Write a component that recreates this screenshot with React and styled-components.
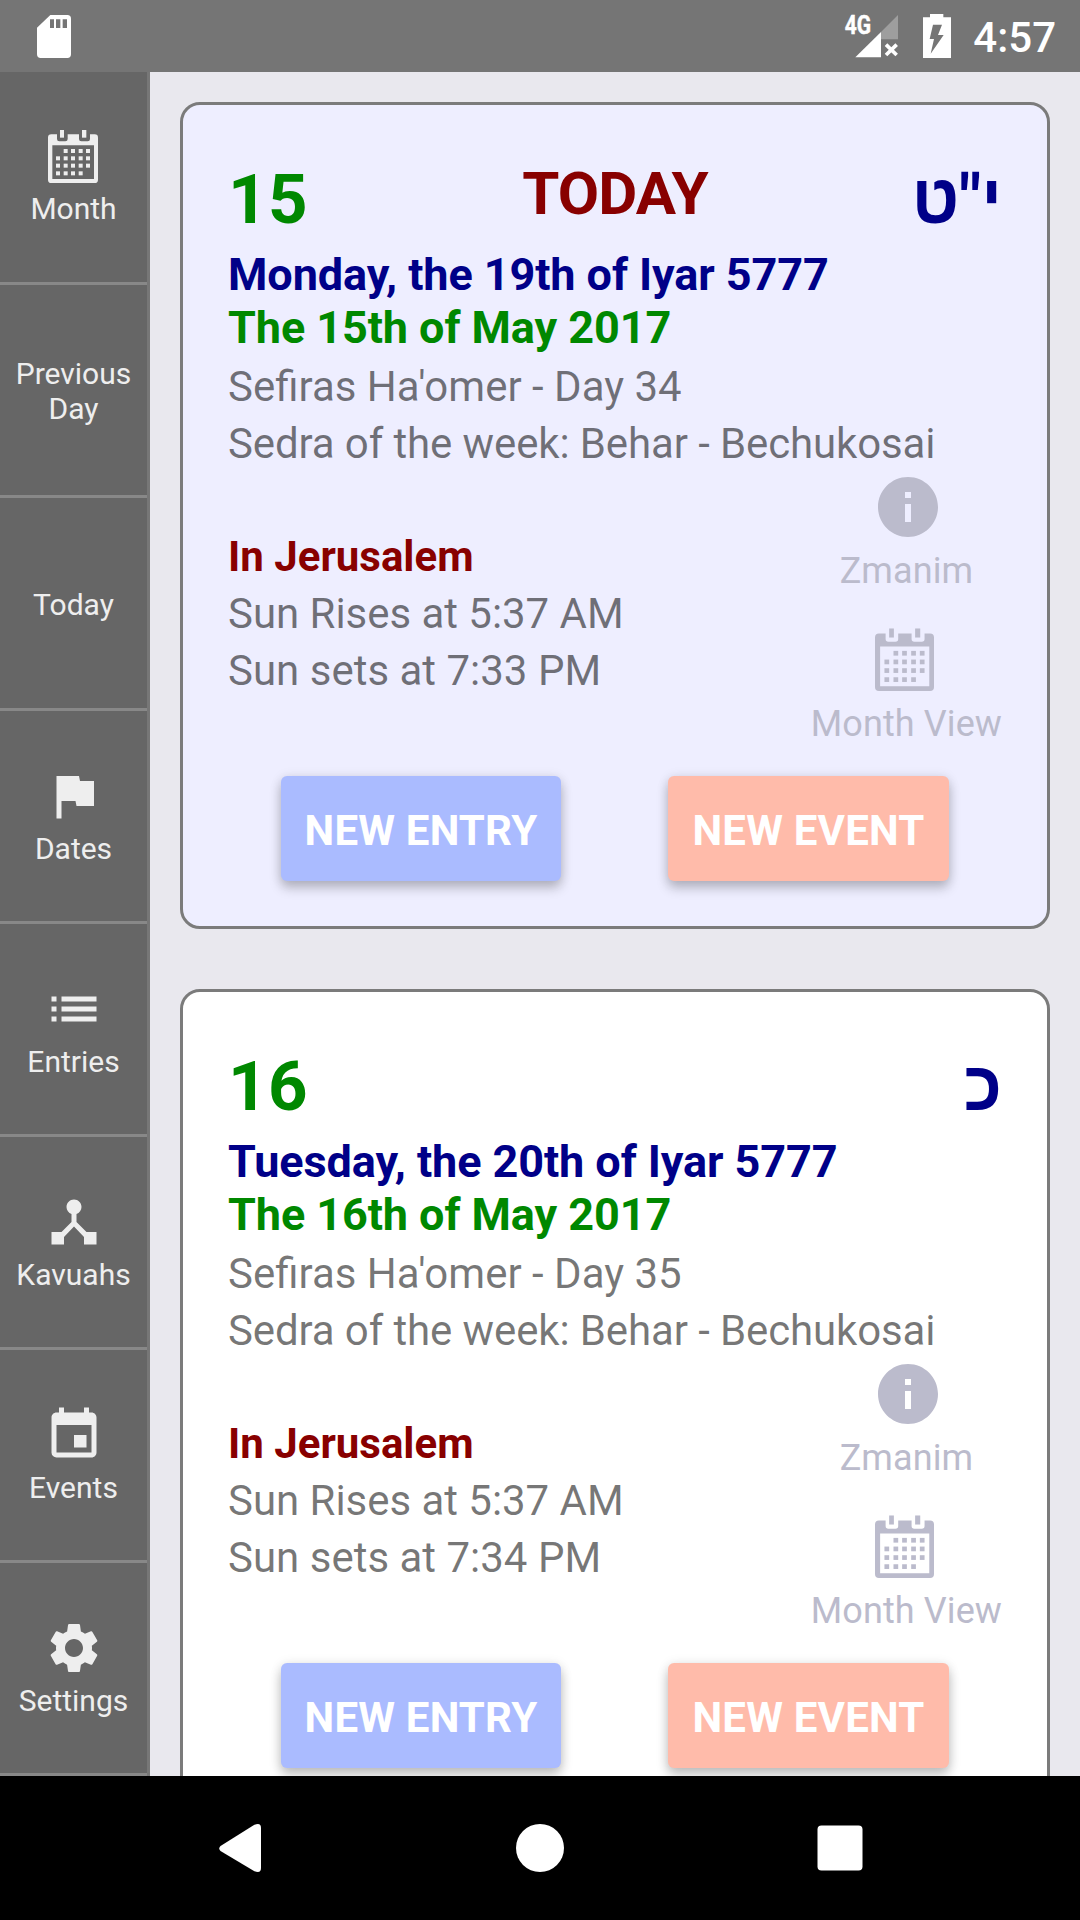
import React from "react";
import styled, { createGlobalStyle } from "styled-components";
import { MdFlag, MdList, MdDeviceHub, MdEvent, MdSettings, MdInfo } from "react-icons/md";

const GlobalStyle = createGlobalStyle`
  html, body { margin: 0; padding: 0; }
  body { width: 1080px; height: 1920px; overflow: hidden; background: #000; }
  * { box-sizing: border-box; }
  svg { display: block; flex: none; overflow: visible; }
`;

const Screen = styled.div`
  width: 1080px;
  height: 1920px;
  display: flex;
  flex-direction: column;
  overflow: hidden;
  font-family: Roboto, "Noto Sans", sans-serif;
`;

const StatusBar = styled.header`
  height: 72px;
  flex: none;
  display: flex;
  align-items: center;
  justify-content: space-between;
  padding: 0 24px 0 37px;
  background: #757575;
  color: #fff;
`;

const StatusIcons = styled.div`
  display: flex;
  align-items: center;
  gap: 24px;
`;

const NetworkType = styled.text`
  font-family: Roboto, sans-serif;
  font-weight: 700;
  font-size: 76px;
  stroke: #fff;
  stroke-width: 1.5px;
`;

const Clock = styled.span`
  margin-left: -2px;
  padding-top: 3px;
  font-size: 42px;
  line-height: 50px;
  font-weight: 500;
`;

const Main = styled.div`
  height: 1704px;
  flex: none;
  display: flex;
  overflow: hidden;
`;

const Sidebar = styled.nav`
  width: 150px;
  flex: none;
  display: flex;
  flex-direction: column;
  background: #666;
  border-right: 3px solid #777;
`;

const NavItem = styled.a`
  height: 213px;
  flex: none;
  display: flex;
  flex-direction: column;
  align-items: center;
  justify-content: center;
  border-bottom: 3px solid #888;
  color: #eee;
  padding-top: ${(p) => (p.$iconless ? 2 : 0)}px;
`;

const NavLabel = styled.span`
  margin-top: ${(p) => p.$gap}px;
  margin-bottom: ${(p) => (p.$gap ? 6 - p.$gap : 0)}px;
  font-size: 30px;
  line-height: 35px;
  text-align: center;
`;

const IconSlot = styled.span`
  height: 60px;
  display: flex;
  align-items: center;
  justify-content: center;
  padding-right: ${(p) => p.$shift || 0}px;
`;

const Feed = styled.main`
  flex: 1;
  min-width: 0;
  background: #e9e8ee;
  padding: 30px 30px 0;
  display: flex;
  flex-direction: column;
  gap: 60px;
`;

const Card = styled.article`
  height: 827px;
  flex: none;
  border: 3px solid #7b7b7b;
  border-radius: 20px;
  padding: 45px;
  background: ${(p) => (p.$today ? "#eeeeff" : "#ffffff")};
`;

const CardHead = styled.div`
  height: 98px;
  display: grid;
  grid-template-columns: 1fr auto 1fr;
  align-items: start;
`;

const DayNumber = styled.span`
  padding-top: 10px;
  font-size: 69px;
  line-height: 80px;
  font-weight: 700;
  letter-spacing: 0.5px;
  color: #008800;
`;

const TodayMark = styled.span`
  padding-top: 9px;
  font-size: 60px;
  line-height: 70px;
  font-weight: 700;
  letter-spacing: -0.8px;
  color: #880000;
`;

const HebrewDay = styled.span`
  padding-top: 10px;
  font-family: Roboto, "Liberation Sans", sans-serif;
  font-size: 69px;
  line-height: 80px;
  font-weight: 700;
  color: #000088;
  text-align: right;
`;

const DateLine = styled.div`
  font-size: 45px;
  line-height: 53px;
  font-weight: 700;
  letter-spacing: -0.08px;
  color: ${(p) => p.$color};
  white-space: nowrap;
`;

const InfoLine = styled.div`
  height: 57px;
  font-size: 42px;
  line-height: 57px;
  color: ${(p) => (p.$place ? "#880000" : "rgba(0, 0, 0, 0.54)")};
  font-weight: ${(p) => (p.$place ? 700 : 400)};
  letter-spacing: ${(p) => p.$tracking || "normal"};
  white-space: nowrap;
`;

const Details = styled.div`
  padding-top: 4px;
`;

const LowerRow = styled.div`
  height: 273px;
  display: flex;
  justify-content: space-between;
`;

const SunTimes = styled.div`
  padding-top: 56px;
`;

const Links = styled.div`
  margin-top: -1px;
  display: flex;
  flex-direction: column;
  align-items: center;
  color: #bbbbcc;
`;

const LinkItem = styled.a`
  display: flex;
  flex-direction: column;
  align-items: center;
  height: ${(p) => p.$height}px;
`;

const LinkIcon = styled.span`
  height: ${(p) => p.$height}px;
  padding-left: ${(p) => p.$left || 0}px;
  padding-right: ${(p) => p.$right || 0}px;
  display: flex;
`;

const LinkLabel = styled.span`
  font-size: 36px;
  line-height: 42px;
  letter-spacing: 0.1px;
  white-space: nowrap;
`;

const Actions = styled.div`
  margin-top: 31px;
  padding: 0 53px;
  display: flex;
  justify-content: space-between;
`;

const ActionButton = styled.button`
  width: ${(p) => p.$width}px;
  height: 105px;
  padding: 4px 0 0;
  border: 0;
  border-radius: 6px;
  background: ${(p) => p.$color};
  color: #fff;
  font-family: inherit;
  font-size: 42px;
  font-weight: 700;
  letter-spacing: 0.2px;
  white-space: nowrap;
  box-shadow: 0 7px 12px rgba(0, 0, 0, 0.22), 0 1px 12px rgba(0, 0, 0, 0.1);
`;

const SystemNav = styled.footer`
  height: 144px;
  flex: none;
  display: flex;
  align-items: center;
  justify-content: space-between;
  padding: 0 216px;
  background: #000;
`;

const DOT_COLUMNS = [24, 47, 69, 92, 114];
const DOT_ROWS = [57, 79, 101, 124];

function CalendarIcon({ width, height }) {
  return (
    <svg width={width} height={height} viewBox="0 0 150 159" fill="currentColor">
      <path
        fillRule="evenodd"
        d="M10 13H27V27Q27 34 34 34H52Q59 34 59 27V13H93V27Q93 34 100 34H119Q126 34 126 27V13H140Q150 13 150 23V149Q150 159 140 159H10Q0 159 0 149V23Q0 13 10 13ZM13 46V147H138V46Z"
      />
      <rect x="36" width="12" height="23" />
      <rect x="102" width="13" height="23" />
      {DOT_ROWS.map((y, r) =>
        DOT_COLUMNS.map((x, c) =>
          (r === 0 && c === 0) || (r === 3 && c === 4) ? null : (
            <rect key={`${r}-${c}`} x={x} y={y} width="12" height="12" />
          )
        )
      )}
    </svg>
  );
}

function SdCardIcon() {
  return (
    <svg width="34" height="43" viewBox="0 0 102 129" fill="#fff">
      <path
        fillRule="evenodd"
        d="M40 0H91Q102 0 102 11V118Q102 129 91 129H11Q0 129 0 118V38ZM39 13V39H51V13ZM57 13V39H70V13ZM77 13V39H90V13Z"
      />
    </svg>
  );
}

function SignalIcon() {
  return (
    <svg width="54" height="44" viewBox="0 0 162 132" fill="#fff">
      <NetworkType x="-1" y="59" textLength="79" lengthAdjust="spacingAndGlyphs">
        4G
      </NetworkType>
      <path d="M159 3V76H108V54Z" opacity="0.3" />
      <path d="M31 130L108 54V130Z" />
      <path d="M123 92L155 123M155 92L123 123" stroke="#fff" strokeWidth="11" />
    </svg>
  );
}

function BatteryIcon() {
  return (
    <svg width="28" height="44" viewBox="0 0 84 132">
      <path fill="#fff" d="M21 0H61V10H84V132H0V10H21Z" />
      <path fill="#757575" d="M30 32H57L45 63H62L23 119L33 75H20Z" />
    </svg>
  );
}

const NAV = [
  { label: "Month", icon: <CalendarIcon width={50} height={53} />, shift: 2, gap: 4 },
  { label: "Previous Day" },
  { label: "Today" },
  { label: "Dates", icon: <MdFlag size={60} />, gap: 5 },
  { label: "Entries", icon: <MdList size={60} />, gap: 5 },
  { label: "Kavuahs", icon: <MdDeviceHub size={60} />, gap: 5 },
  { label: "Events", icon: <MdEvent size={60} />, gap: 5 },
  { label: "Settings", icon: <MdSettings size={60} />, gap: 5 },
];

const DAYS = [
  {
    day: "15",
    hebrew: "י\"ט",
    today: true,
    jewishDate: "Monday, the 19th of Iyar 5777",
    secularDate: "The 15th of May 2017",
    omer: "Sefiras Ha'omer - Day 34",
    sunset: "Sun sets at 7:33 PM",
  },
  {
    day: "16",
    hebrew: "כ",
    today: false,
    jewishDate: "Tuesday, the 20th of Iyar 5777",
    secularDate: "The 16th of May 2017",
    omer: "Sefiras Ha'omer - Day 35",
    sunset: "Sun sets at 7:34 PM",
  },
];

function DayCard({ data }) {
  return (
    <Card $today={data.today}>
      <CardHead>
        <DayNumber>{data.day}</DayNumber>
        <TodayMark>{data.today ? "TODAY" : ""}</TodayMark>
        <HebrewDay>{data.hebrew}</HebrewDay>
      </CardHead>
      <DateLine $color="#000088">{data.jewishDate}</DateLine>
      <DateLine $color="#008800">{data.secularDate}</DateLine>
      <Details>
        <InfoLine>{data.omer}</InfoLine>
        <InfoLine $tracking="-0.12px">Sedra of the week: Behar - Bechukosai</InfoLine>
      </Details>
      <LowerRow>
        <SunTimes>
          <InfoLine $place>In Jerusalem</InfoLine>
          <InfoLine $tracking="-0.04px">Sun Rises at 5:37 AM</InfoLine>
          <InfoLine>{data.sunset}</InfoLine>
        </SunTimes>
        <Links>
          <LinkItem $height={157}>
            <LinkIcon $height={79} $left={3}>
              <MdInfo size={72} />
            </LinkIcon>
            <LinkLabel>Zmanim</LinkLabel>
          </LinkItem>
          <LinkItem $height={117}>
            <LinkIcon $height={76} $right={4}>
              <CalendarIcon width={59} height={63.5} />
            </LinkIcon>
            <LinkLabel>Month View</LinkLabel>
          </LinkItem>
        </Links>
      </LowerRow>
      <Actions>
        <ActionButton $width={280} $color="#aabbff">NEW ENTRY</ActionButton>
        <ActionButton $width={281} $color="#ffbbaa">NEW EVENT</ActionButton>
      </Actions>
    </Card>
  );
}

export default function App() {
  return (
    <Screen>
      <GlobalStyle />
      <StatusBar>
        <SdCardIcon />
        <StatusIcons>
          <SignalIcon />
          <BatteryIcon />
          <Clock>4:57</Clock>
        </StatusIcons>
      </StatusBar>
      <Main>
        <Sidebar>
          {NAV.map(({ label, icon, shift, gap = 0 }) => (
            <NavItem key={label} $iconless={!icon}>
              {icon && <IconSlot $shift={shift}>{icon}</IconSlot>}
              <NavLabel $gap={gap}>{label}</NavLabel>
            </NavItem>
          ))}
        </Sidebar>
        <Feed>
          {DAYS.map((d) => (
            <DayCard key={d.day} data={d} />
          ))}
        </Feed>
      </Main>
      <SystemNav>
        <svg width="48" height="48" viewBox="0 0 48 48" fill="#fff">
          <path d="M4.500 22L38 1Q45 -2 45 4V44Q45 50 38 47L4.500 27Q2 24.500 4.500 22Z" />
        </svg>
        <svg width="48" height="48" viewBox="0 0 48 48" fill="#fff">
          <circle cx="24" cy="24" r="24" />
        </svg>
        <svg width="48" height="48" viewBox="0 0 48 48" fill="#fff">
          <rect x="1.500" y="1.500" width="45" height="45" rx="4" />
        </svg>
      </SystemNav>
    </Screen>
  );
}
